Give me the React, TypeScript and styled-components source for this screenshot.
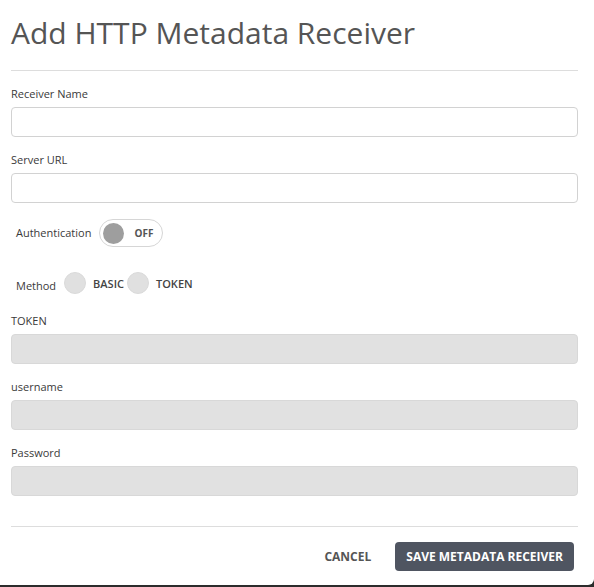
import {FC, useState} from 'react'
import styled, {createGlobalStyle} from 'styled-components'

const GlobalStyle = createGlobalStyle`
  html, body {
    margin: 0;
    padding: 0;
    background: #2c2c2c;
  }

  body {
    font-family: 'Open Sans', 'Liberation Sans', sans-serif;
    color: #3a3a3a;
  }
`

const fields = [
  {label: 'TOKEN', disabled: true},
  {label: 'username', disabled: true},
  {label: 'Password', disabled: true},
]

const App: FC = () => {
  const [auth, setAuth] = useState(false)
  const [method, setMethod] = useState<string | null>(null)

  return (
    <>
      <GlobalStyle/>
      <Modal>
        <Title>Add HTTP Metadata Receiver</Title>
        <Divider/>
        <Field>
          <Label>Receiver Name</Label>
          <Input type="text"/>
        </Field>
        <Field>
          <Label>Server URL</Label>
          <Input type="text"/>
        </Field>
        <InlineRow>
          <InlineLabel>Authentication</InlineLabel>
          <Toggle type="button" onClick={() => setAuth((previous) => !previous)}>
            <Knob on={auth}/>
            <ToggleText>{auth ? 'ON' : 'OFF'}</ToggleText>
          </Toggle>
        </InlineRow>
        <MethodRow>
          <MethodLabel>Method</MethodLabel>
          {['BASIC', 'TOKEN'].map((item) => (
            <RadioOption key={item} onClick={() => setMethod(item)}>
              <RadioCircle checked={method === item}/>
              <RadioText>{item}</RadioText>
            </RadioOption>
          ))}
        </MethodRow>
        {fields.map((field) => (
          <Field key={field.label}>
            <Label>{field.label}</Label>
            <Input type="text" disabled={field.disabled}/>
          </Field>
        ))}
        <FooterDivider/>
        <Footer>
          <CancelButton type="button">Cancel</CancelButton>
          <SaveButton type="button">Save Metadata Receiver</SaveButton>
        </Footer>
      </Modal>
    </>
  )
}

export default App

const Modal = styled.div`
  box-sizing: border-box;
  width: 594px;
  height: 585px;
  background: #fff;
  border-bottom-right-radius: 6px;
  padding: 15px 16px 0 11px;
  display: flex;
  flex-direction: column;
`

const Title = styled.h1`
  margin: 0;
  font-size: 30px;
  line-height: 36px;
  font-weight: 400;
  color: #555;
`

const Divider = styled.hr`
  margin: 19px 0 0;
  border: 0;
  border-top: 1px solid #ddd;
`

const Field = styled.div`
  display: flex;
  flex-direction: column;
  margin-top: 15px;
`

const Label = styled.label`
  font-size: 11px;
  line-height: 16px;
  color: #3a3a3a;
  margin-bottom: 5px;
`

const Input = styled.input`
  box-sizing: border-box;
  height: 30px;
  width: 100%;
  margin: 0;
  border: 1px solid #d2d2d2;
  border-radius: 4px;
  background: #fff;
  padding: 0 8px;
  font: inherit;
  font-size: 12px;

  &:disabled {
    background: #e1e1e1;
    border-color: #d8d8d8;
  }
`

const InlineRow = styled.div`
  display: flex;
  align-items: center;
  gap: 8px;
  margin-top: 16px;
  padding-left: 5px;
`

const InlineLabel = styled.span`
  font-size: 11px;
  line-height: 16px;
  color: #3a3a3a;
`

const Toggle = styled.button`
  box-sizing: border-box;
  display: flex;
  align-items: center;
  width: 64px;
  height: 28px;
  padding: 0 0 0 3px;
  border: 1px solid #d6d6d6;
  border-radius: 14px;
  background: #fff;
  cursor: pointer;
`

const Knob = styled.span<{on: boolean}>`
  width: 21px;
  height: 21px;
  border-radius: 50%;
  background: ${p => p.on ? '#4f5561' : '#9e9e9e'};
`

const ToggleText = styled.span`
  margin-left: 10px;
  font-family: 'Open Sans', 'Liberation Sans', sans-serif;
  font-size: 10px;
  font-weight: 700;
  color: #555;
`

const MethodRow = styled.div`
  display: flex;
  align-items: center;
  margin: 25px 0 4px;
  padding-left: 5px;
  height: 22px;
`

const MethodLabel = styled.span`
  font-size: 11px;
  line-height: 16px;
  color: #3a3a3a;
  padding-top: 5px;
  margin-right: 8px;
`

const RadioOption = styled.span`
  display: flex;
  align-items: center;
  cursor: pointer;
  margin-right: 3px;
`

const RadioCircle = styled.span<{checked: boolean}>`
  box-sizing: border-box;
  width: 22px;
  height: 22px;
  border-radius: 50%;
  background: #e0e0e0;
  border: ${p => p.checked ? '6px solid #4f5561' : '1px solid #dadada'};
`

const RadioText = styled.span`
  margin-left: 7px;
  font-size: 11px;
  font-weight: 600;
  color: #444;
`

const FooterDivider = styled.hr`
  margin: 30px 0 0;
  border: 0;
  border-top: 1px solid #ddd;
`

const Footer = styled.div`
  display: flex;
  justify-content: flex-end;
  align-items: center;
  gap: 24px;
  margin-top: 15px;
  padding-right: 4px;
`

const CancelButton = styled.button`
  border: 0;
  background: none;
  padding: 0;
  font-family: 'Open Sans', 'Liberation Sans', sans-serif;
  font-size: 12px;
  font-weight: 700;
  text-transform: uppercase;
  color: #555;
  cursor: pointer;
`

const SaveButton = styled.button`
  height: 29px;
  padding: 0 11px;
  border: 0;
  border-radius: 4px;
  background: #4f5561;
  color: #fff;
  font-family: 'Open Sans', 'Liberation Sans', sans-serif;
  font-size: 12px;
  font-weight: 700;
  text-transform: uppercase;
  cursor: pointer;
`
